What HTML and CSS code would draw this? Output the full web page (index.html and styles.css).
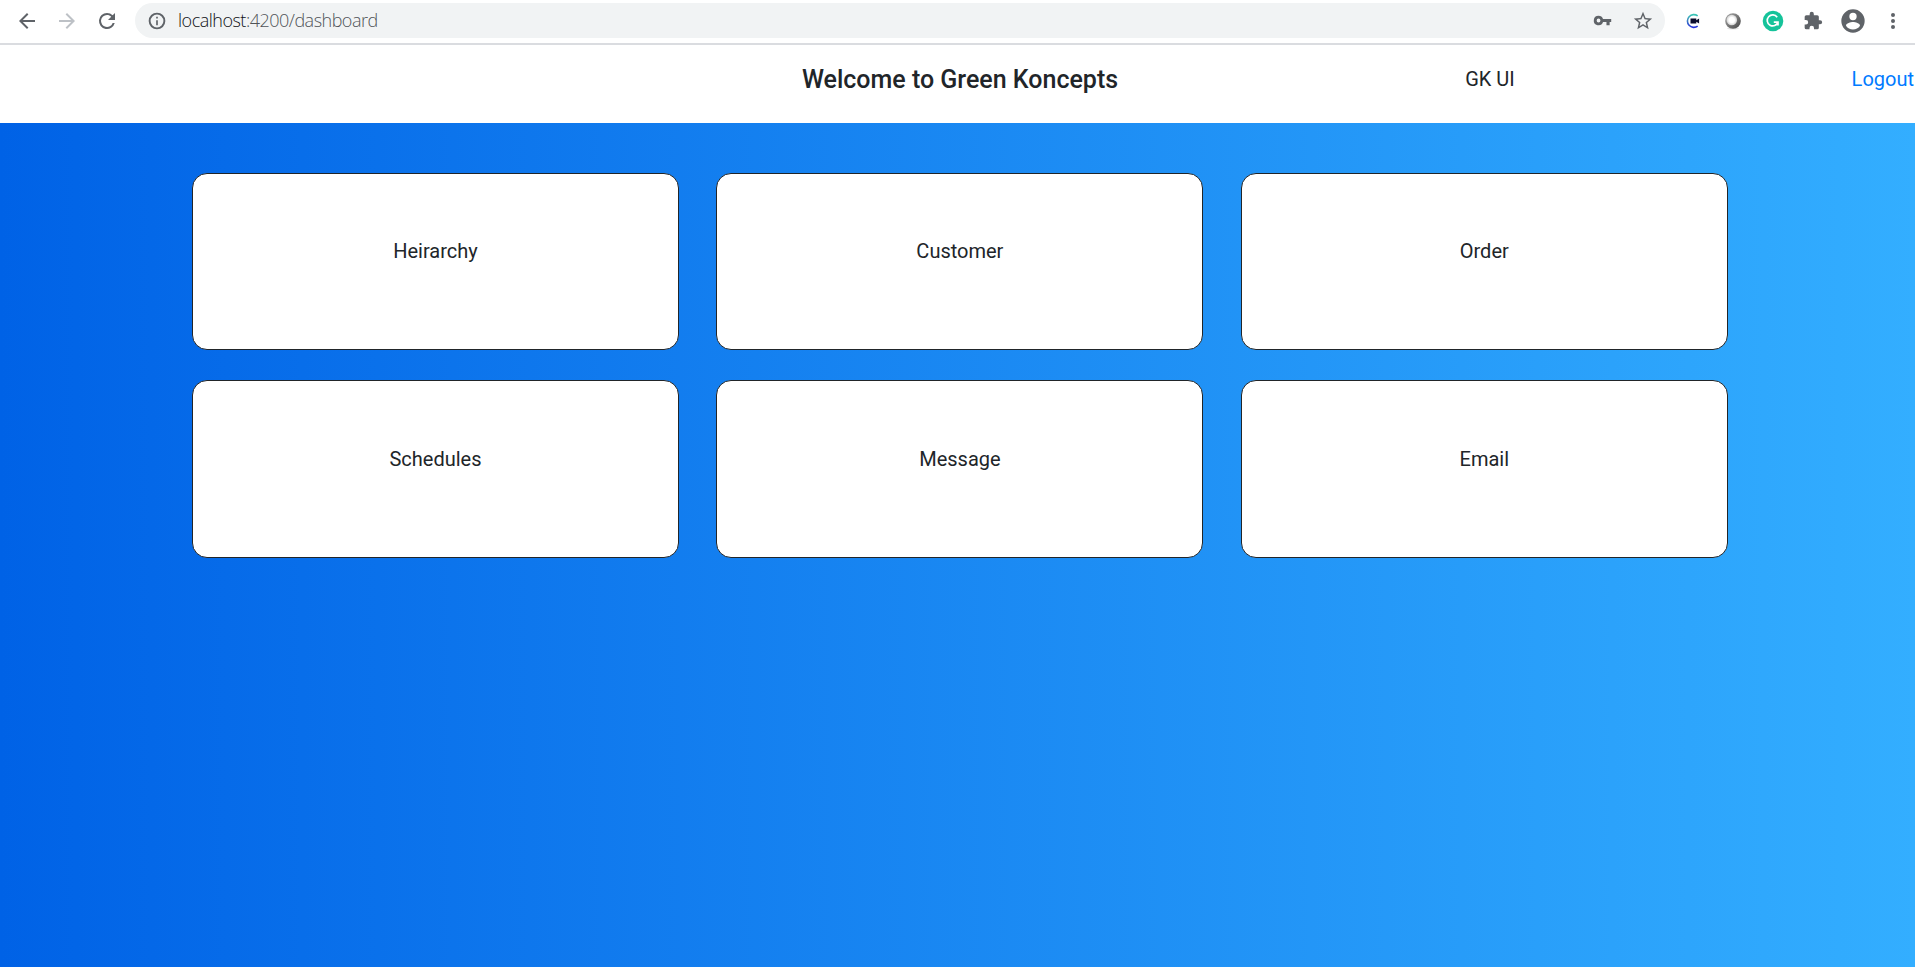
FILE: index.html
```html
<!DOCTYPE html>
<html lang="en">
<head>
<meta charset="utf-8">
<title>Dashboard</title>
<link rel="stylesheet" href="styles.css">
</head>
<body>
<div class="browser-bar">
  <div class="nav-buttons">
    <svg class="icon-nav" viewBox="0 0 24 24"><path fill="#5f6368" d="M20 11H7.83l5.59-5.59L12 4l-8 8 8 8 1.41-1.41L7.83 13H20v-2z"/></svg>
    <svg class="icon-nav" viewBox="0 0 24 24"><path fill="#bdc1c6" d="M12 4l-1.41 1.41L16.17 11H4v2h12.17l-5.58 5.59L12 20l8-8z"/></svg>
    <svg class="icon-nav" viewBox="0 0 24 24"><path fill="#5f6368" d="M17.65 6.35A7.96 7.96 0 0 0 12 4a8 8 0 1 0 7.73 10h-2.08A6 6 0 1 1 12 6c1.66 0 3.14.69 4.22 1.78L13 11h7V4l-2.35 2.35z"/></svg>
  </div>
  <div class="address">
    <svg class="icon-info" viewBox="0 0 24 24"><path fill="#5f6368" d="M11 17h2v-6h-2v6zm0-8h2V7h-2v2zM12 2a10 10 0 1 0 0 20 10 10 0 0 0 0-20zm0 17.700a7.700 7.700 0 1 1 0-15.400 7.700 7.700 0 0 1 0 15.400z"/></svg>
    <span class="url"><span class="host">localhost</span>:4200/dashboard</span>
    <svg class="icon-key" viewBox="0 0 24 24"><path fill="#5f6368" d="M12.65 10A6 6 0 0 0 7 6a6 6 0 1 0 5.65 8H17v4h4v-4h2v-4H12.65zM7 14.4a2.4 2.4 0 1 1 0-4.8 2.4 2.4 0 0 1 0 4.8z"/></svg>
    <svg class="icon-star" viewBox="0 0 24 24"><path fill="#5f6368" d="M22 9.24l-7.19-.62L12 2 9.19 8.63 2 9.24l5.46 4.73L5.82 21 12 17.27 18.18 21l-1.63-7.03L22 9.24zM12 15.4l-3.76 2.27 1-4.28-3.32-2.88 4.38-.38L12 6.1l1.71 4.04 4.38.38-3.32 2.88 1 4.28L12 15.4z"/></svg>
  </div>
  <div class="tools">
    <svg class="tool" viewBox="0 0 24 24">
      <defs>
        <linearGradient id="ring" x1="0" y1="0" x2="0" y2="1"><stop offset="0" stop-color="#39c6b4"/><stop offset=".5" stop-color="#3b7cc4"/><stop offset="1" stop-color="#2430d8"/></linearGradient>
        <linearGradient id="ball" x1="0" y1="0" x2="1" y2="1"><stop offset="0" stop-color="#aaa"/><stop offset="1" stop-color="#444"/></linearGradient>
        <radialGradient id="shine"><stop offset=".5" stop-color="#fff"/><stop offset="1" stop-color="#d0d0d0"/></radialGradient>
      </defs>
      <path d="M16.7 6.9A6.4 6.4 0 1 0 16.7 17.1" fill="none" stroke="url(#ring)" stroke-width="1.6"/>
      <path d="M9.500 9.4h5.8v1.8l2.8-1.7v5l-2.8-1.7v1.8H9.500z" fill="#0b0d2c"/>
    </svg>
    <svg class="tool" viewBox="0 0 24 24"><ellipse cx="12" cy="19.3" rx="6" ry="1.3" fill="#e4e4e4"/><circle cx="12" cy="12" r="7.8" fill="url(#ball)"/><circle cx="10.8" cy="11" r="5.3" fill="url(#shine)"/></svg>
    <svg class="tool" viewBox="0 0 24 24"><circle cx="12" cy="12" r="10.3" fill="#15c39a"/><path d="M16.2 8.2A5.500 5.500 0 1 0 17 13.1M12.8 13.1h4.2v3.4" fill="none" stroke="#fff" stroke-width="1.700"/></svg>
    <svg class="tool tool-puzzle" viewBox="0 0 24 24"><path fill="#5f6368" d="M20.5 11H19V7a2 2 0 0 0-2-2h-4V3.500a2.500 2.500 0 0 0-5 0V5H4a2 2 0 0 0-2 2v3.800h1.500a2.700 2.700 0 0 1 0 5.400H2V20a2 2 0 0 0 2 2h3.800v-1.500a2.700 2.700 0 0 1 5.400 0V22H17a2 2 0 0 0 2-2v-4h1.500a2.500 2.500 0 0 0 0-5z"/></svg>
    <svg class="tool tool-user" viewBox="0 0 24 24"><path fill="#5f6368" d="M12 2a10 10 0 1 0 0 20 10 10 0 0 0 0-20zm0 3a3 3 0 1 1 0 6.300 3 3 0 0 1 0-6.300zm0 14.200a7.200 7.200 0 0 1-6-3.220c.03-1.990 4-3.080 6-3.080s5.970 1.090 6 3.080a7.200 7.200 0 0 1-6 3.220z"/></svg>
    <svg class="tool" viewBox="0 0 24 24"><g fill="#5f6368"><circle cx="12" cy="6" r="2"/><circle cx="12" cy="12" r="2"/><circle cx="12" cy="18" r="2"/></g></svg>
  </div>
</div>
<header class="page-header">
  <span></span>
  <h1 class="title">Welcome to Green Koncepts</h1>
  <span class="brand">GK UI</span>
  <a class="logout">Logout</a>
</header>
<main class="dashboard">
  <div class="card">Heirarchy</div>
  <div class="card">Customer</div>
  <div class="card">Order</div>
  <div class="card">Schedules</div>
  <div class="card">Message</div>
  <div class="card">Email</div>
</main>
</body>
</html>
```
FILE: styles.css
```css
* { box-sizing: border-box; }
body {
  margin: 0;
  height: 968px;
  overflow: hidden;
  display: flex;
  flex-direction: column;
  background: #fff;
  color: #212529;
  font: 20px/30px Roboto, sans-serif;
}
svg { display: block; flex: none; }
.browser-bar {
  height: 45px;
  flex: none;
  display: flex;
  align-items: flex-start;
  padding: 3px 1px 0 15px;
  border-bottom: 2px solid #dadce0;
}
.nav-buttons { display: flex; gap: 16px; height: 35px; align-items: center; width: 120px; }
.icon-nav { width: 24px; height: 24px; }
.address {
  width: 1530px;
  height: 35px;
  display: flex;
  align-items: center;
  border-radius: 18px;
  background: #f1f3f4;
  padding: 0 11px 0 12px;
}
.icon-info { width: 20px; height: 20px; }
.url {
  margin-left: 11px;
  margin-right: auto;
  padding-bottom: 2px;
  font: 300 18px/24px "Open Sans", sans-serif;
  letter-spacing: -0.5px;
  color: #505458;
}
.host { color: #101114; }
.icon-key { width: 19px; height: 19px; margin-right: 20px; }
.icon-star { width: 22px; height: 22px; }
.tools { display: flex; gap: 16px; height: 35px; align-items: center; margin-left: 15.5px; }
.tool { width: 24px; height: 24px; }
.tool-puzzle { width: 20px; height: 20px; margin: 0 2px; }
.tool-user { width: 28px; height: 28px; margin: 0 -2px; }
.page-header {
  height: 78px;
  flex: none;
  display: grid;
  grid-template-columns: 700px 520px 540px 154px;
  padding-top: 19px;
}
.title { margin: 0; padding-top: 1px; font-size: 25px; line-height: 30px; font-weight: 500; text-align: center; }
.brand { text-align: center; }
.logout { text-align: right; color: #007bff; }
.dashboard {
  height: 844px;
  flex: none;
  padding: 50px 187px 0 192px;
  display: grid;
  grid-template-columns: repeat(3, 487px);
  grid-template-rows: 177px 178px;
  align-content: start;
  gap: 30px 37.4px;
  background: linear-gradient(to right, #0062e6, #33aeff);
}
.card {
  border: 1px solid #212529;
  border-radius: 15px;
  background: #fff;
  padding-top: 62px;
  text-align: center;
}
.card:nth-child(n+4) { padding-top: 63px; }
```
